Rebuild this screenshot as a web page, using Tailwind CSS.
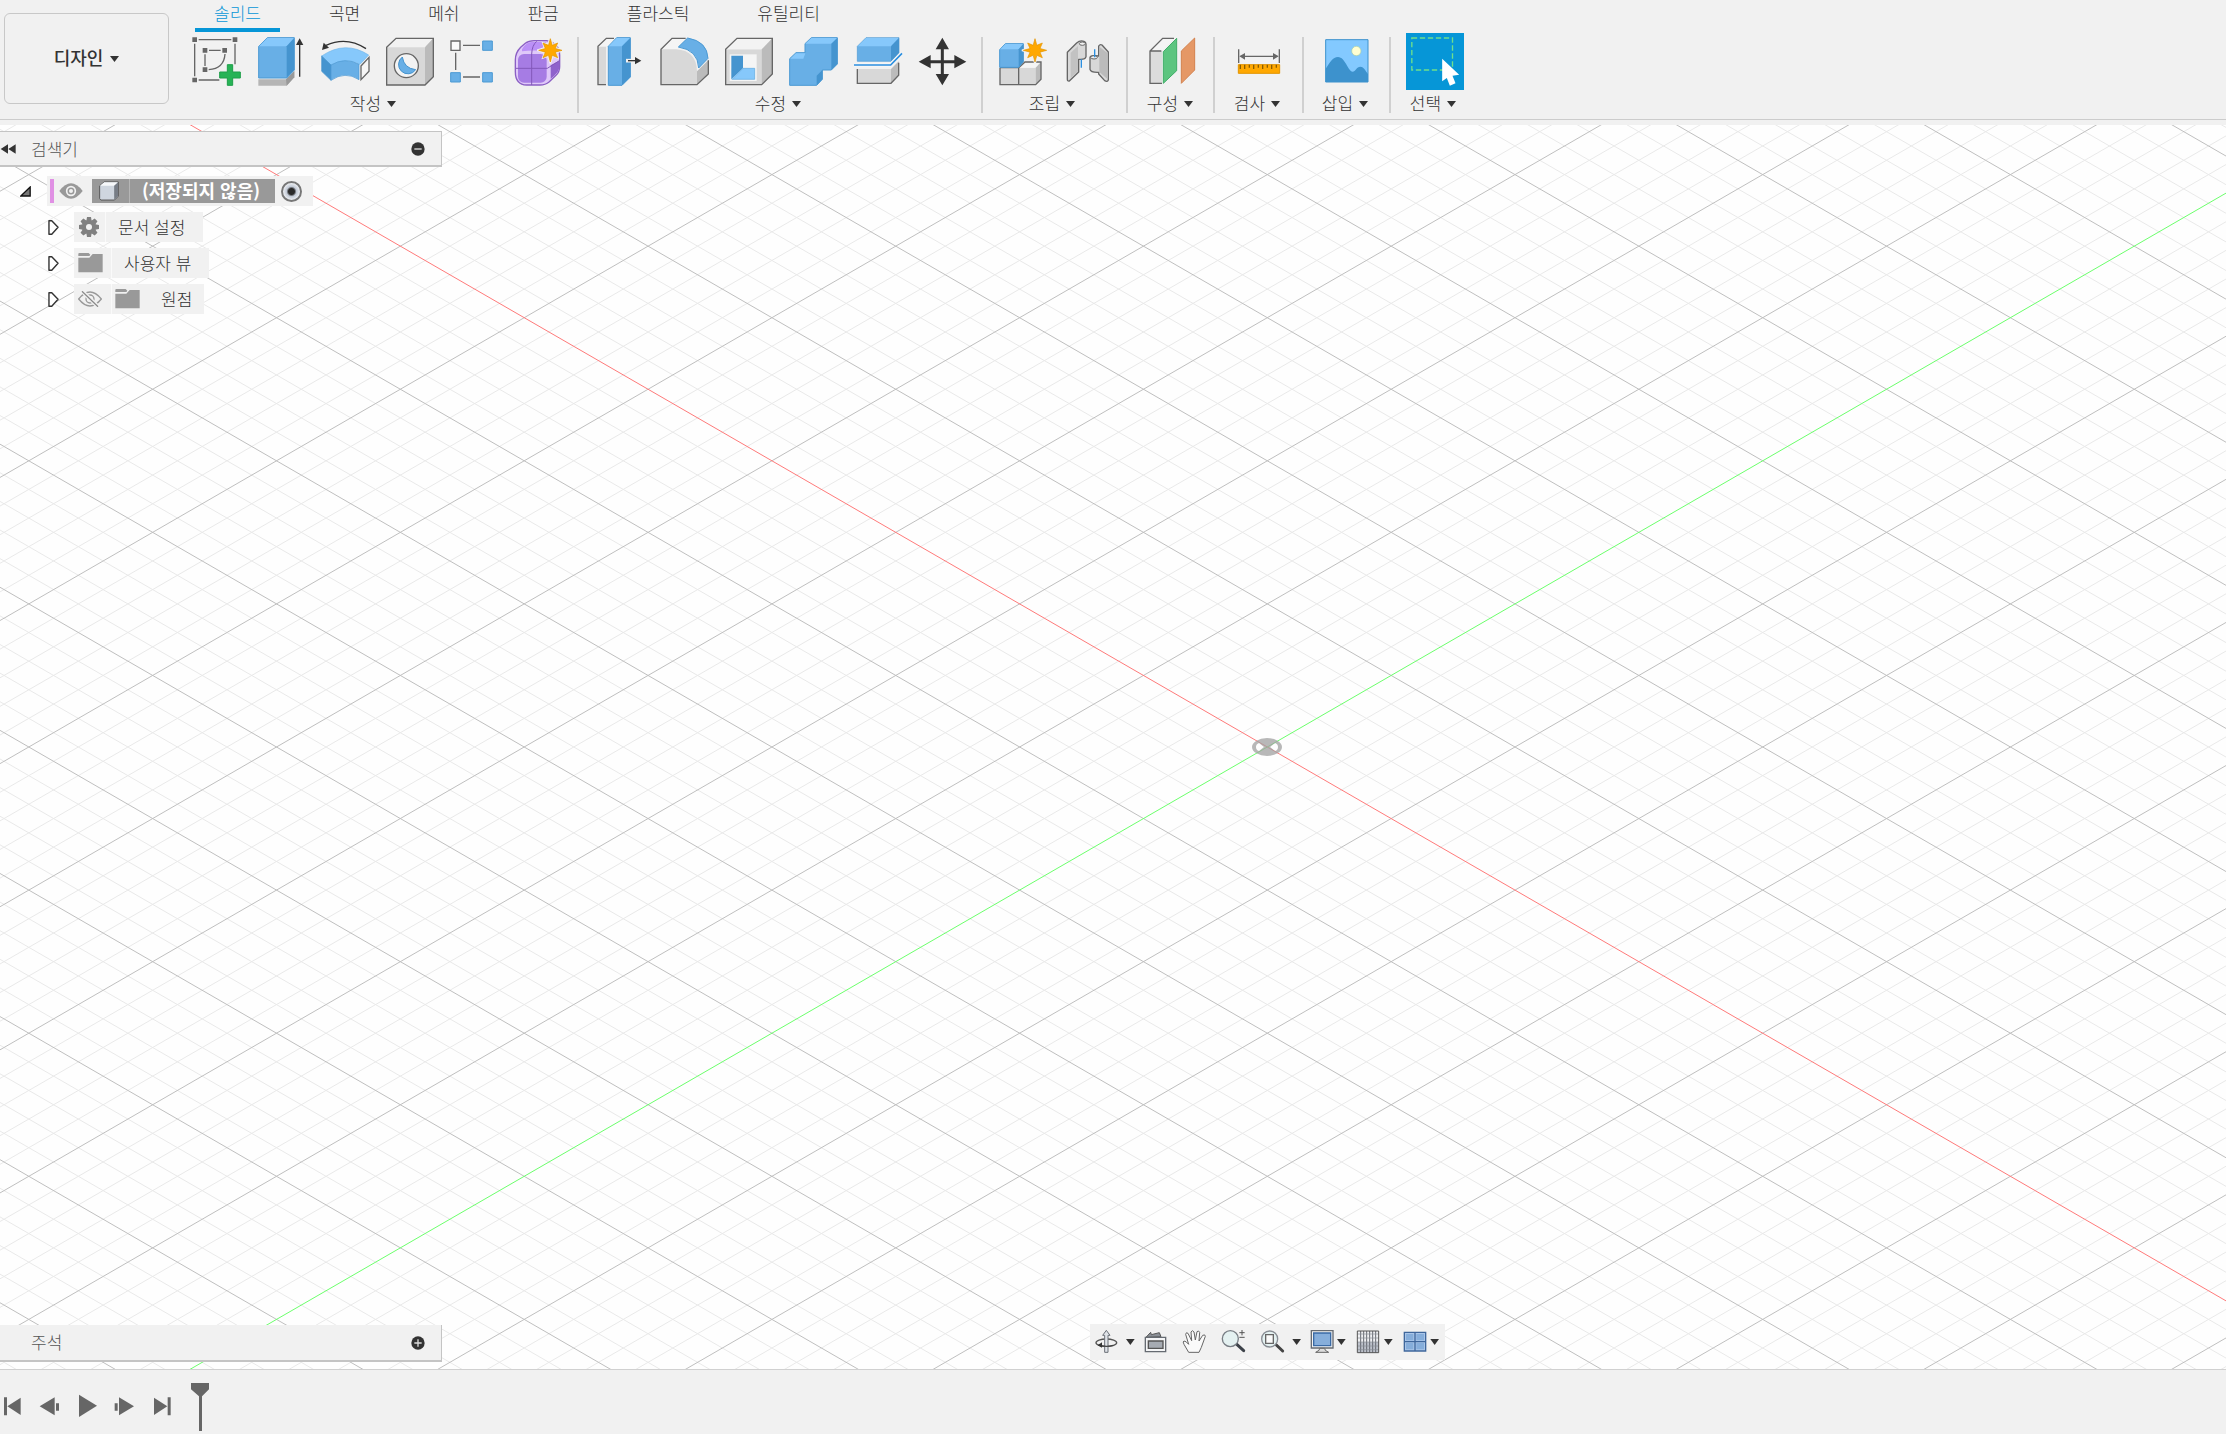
<!DOCTYPE html>
<html lang="ko">
<head>
<meta charset="utf-8">
<meta name="viewport" content="width=device-width, initial-scale=1">
<title>디자인</title>
<script src="https://cdn.jsdelivr.net/npm/@tailwindcss/browser@4"></script>
</head>
<body class="flex h-screen flex-col overflow-hidden bg-[#f1f1f1] font-['Noto_Sans_CJK_KR',sans-serif] text-[17px] leading-6 font-light text-[#333]">

<svg class="hidden" aria-hidden="true">
  <symbol id="caret" viewBox="0 0 27 18"><path d="M0 0H27L13.500 18Z" fill="#333"/></symbol>
  <symbol id="burst" viewBox="-40 -40 80 80"><path d="M0-36L6.500-16L21-21L16-6.500L36 0L16 6.500L21 21L6.500 16L0 36L-6.500 16L-21 21L-16 6.500L-36 0L-16-6.500L-21-21L-6.500-16Z" fill="#f1f1f1" stroke="#f1f1f1" stroke-width="7"/><path d="M0-35L5.500-15L22-22L15-5.500L35 0L15 5.500L22 22L5.500 15L0 35L-5.500 15L-22 22L-15 5.500L-35 0L-15-5.500L-22-22L-5.500-15Z" fill="#ffa800" stroke="#e29400" stroke-width="2"/></symbol>
  <symbol id="folder" viewBox="0 0 75 60"><path d="M1 3Q1 0 4 0H32L37 5Q36 9 32 9H1Z" fill="#999"/><path d="M1 14H34L44 3H74V58H1Z" fill="#999"/></symbol>
  <symbol id="expand" viewBox="0 0 30 43"><path d="M2 2H10L28 21L10 41H2Z" fill="#fff" stroke="#333" stroke-width="4" stroke-linejoin="round"/></symbol>
</svg>

<header class="flex border-b border-[#ccc] pb-px">
  <button class="mt-[13px] ml-1 flex h-[91px] w-[165px] shrink-0 items-center justify-center gap-[7px] rounded-md border border-[#c8c8c8] pb-1 text-lg font-medium">디자인
    <svg class="mt-1 h-1.5 w-[9px]"><use href="#caret"/></svg>
  </button>
  <div class="ml-4 flex min-w-0 flex-1 flex-col">
    <nav class="mb-px ml-[10px] flex gap-[30px]">
      <button class="h-8 border-b-4 border-[#0696d7] px-[19px] pb-[3px] text-[#0696d7]">솔리드</button>
      <button class="h-8 border-b-4 border-transparent px-[19px] pb-[3px]">곡면</button>
      <button class="h-8 border-b-4 border-transparent px-[19px] pb-[3px]">메쉬</button>
      <button class="h-8 border-b-4 border-transparent px-[19px] pb-[3px]">판금</button>
      <button class="h-8 border-b-4 border-transparent px-[19px] pb-[3px]">플라스틱</button>
      <button class="h-8 border-b-4 border-transparent px-[19px] pb-[3px]">유틸리티</button>
    </nav>
    <div class="flex">
      <!-- Create -->
      <section class="flex flex-col items-center">
        <div class="flex">
          <button aria-label="스케치 작성" class="h-[57px] w-16"><svg viewBox="15 99 192 171" class="size-full">
            <g fill="#666"><path d="M37 112h14v14H37zM158 112h14v14h-14zM37 233h14v14H37zM68 144h14v14H68zM127 144h14v14h-14zM68 202h14v14H68z"/></g>
            <path d="M56 119H154M44 131V229M165 131V193M56 240H118M75 163V198M87 151H122M135 162Q132 206 86 209" fill="none" stroke="#666" stroke-width="4"/>
            <path d="M142 194h16v22h23v18h-23v22h-16v-22h-23v-18h23z" fill="#27b356" stroke="#1f9f4a" stroke-width="3"/></svg></button>
          <button aria-label="돌출" class="h-[57px] w-16"><svg viewBox="207 99 192 171" class="size-full">
            <path d="M235 238H318L343 213V232L320 257H235Z" fill="#b5b5b5"/><path d="M318 238L343 213V232L320 257Z" fill="#999"/>
            <path d="M236 139L262 113H343V210L320 234H236Z" fill="#68afe6" stroke="#4b99d3" stroke-width="3"/>
            <path d="M237 139L262 114H342L320 139Z" fill="#86c8fb"/><path d="M320 139L342 115V210L320 233Z" fill="#4594cf"/>
            <path d="M359 130V230" stroke="#333" stroke-width="4"/><path d="M359 115L370 135H348Z" fill="#333"/></svg></button>
          <button aria-label="회전" class="h-[57px] w-16"><svg viewBox="399 99 192 171" class="size-full">
            <path d="M438 136Q500 108 558 146" fill="none" stroke="#333" stroke-width="4"/><path d="M426 150L431 128L447 143Z" fill="#333"/>
            <path d="M425 168Q496 120 566 165L540 193Q495 170 453 195Z" fill="#86c8fb" stroke="#6fb5ea" stroke-width="2"/>
            <path d="M425 168L453 195V241L425 214Z" fill="#4594cf" stroke="#4594cf" stroke-width="2"/>
            <path d="M453 195Q495 170 537 193V239Q495 212 453 241Z" fill="#68afe6" stroke="#4b99d3" stroke-width="2"/>
            <path d="M543 198L567 172V214L543 239Z" fill="#f6f6f6" stroke="#666" stroke-width="4"/></svg></button>
          <button aria-label="구멍" class="h-[57px] w-16"><svg viewBox="591 99 192 171" class="size-full">
            <path d="M620 142L650 115H760V230L735 255H620Z" fill="#d8d8d8"/><path d="M620 142L650 115H760L735 142Z" fill="#f2f2f2"/><path d="M735 142L760 115V230L735 255Z" fill="#bbb"/>
            <path d="M620 142L648 115H760V230L735 255H620Z" fill="none" stroke="#666" stroke-width="4"/>
            <circle cx="679" cy="197" r="36" fill="#f3f3f3" stroke="#666" stroke-width="4"/>
            <path d="M667 171Q672 205 707 209A28 28 0 1 1 667 171Z" fill="#68afe6" stroke="#4594cf" stroke-width="3"/></svg></button>
          <button aria-label="직사각형 패턴" class="h-[57px] w-16"><svg viewBox="783 99 192 171" class="size-full">
            <path d="M813 123h27v28h-27z" fill="#fafafa" stroke="#666" stroke-width="4"/>
            <path d="M908 123h29v28h-29zM812 218h29v28h-29zM908 218h29v28h-29z" fill="#68afe6" stroke="#4b99d3" stroke-width="3"/>
            <path d="M849 136H900M827 158V210M849 231H900" stroke="#666" stroke-width="4"/></svg></button>
          <button aria-label="양식 작성" class="h-[57px] w-16"><svg viewBox="975 99 192 171" class="size-full">
            <path d="M1006 180Q1006 158 1022 142L1036 130Q1046 122 1062 122H1100Q1139 130 1139 165V200Q1139 215 1128 226L1108 245Q1096 255 1080 255H1040Q1006 254 1006 215Z" fill="#dfc8f9" stroke="#8b5fc4" stroke-width="4"/>
            <path d="M1026 148Q1036 127 1056 126H1098L1084 152Q1050 150 1026 154Z" fill="#bb90f7"/>
            <path d="M1112 196L1138 182V204Q1134 220 1112 236Z" fill="#8f62cc"/>
            <rect x="1014" y="162" width="86" height="86" rx="18" fill="#a67ce4"/>
            <path d="M1055 255V162Q1056 136 1070 124M1008 205H1102L1138 182" stroke="#8358ba" stroke-width="3" fill="none"/>
            <use href="#burst" x="1071" y="111" width="80" height="80"/></svg></button>
        </div>
        <button class="flex h-7 items-center gap-1.5 pr-2 pb-[2px]">작성<svg class="mt-0.5 h-1.5 w-[9px]"><use href="#caret"/></svg></button>
      </section>
      <div class="mt-1 mr-[11px] ml-2 h-[76px] w-0.5 bg-[#d0d0d0]"></div>
      <!-- Modify -->
      <section class="flex flex-col items-center">
        <div class="flex">
          <button aria-label="밀고 당기기" class="h-[57px] w-16"><svg viewBox="60 99 192 171" class="size-full">
            <path d="M84 140H108V255H84Z" fill="#d8d8d8"/><path d="M84 139L109 115H132L112 139Z" fill="#f5f5f5"/>
            <path d="M108 254H84V139L109 115H132" fill="none" stroke="#666" stroke-width="4"/>
            <path d="M115 139L140 113H181V231L156 256H115Z" fill="#68afe6" stroke="#4b99d3" stroke-width="3"/>
            <path d="M116 139L140 114H180L156 139Z" fill="#86c8fb"/><path d="M156 139L181 114V231L156 256Z" fill="#4594cf"/>
            <path d="M168 182H200" stroke="#f1f1f1" stroke-width="11"/><path d="M174 182H200" stroke="#333" stroke-width="4"/><path d="M195 171L214 182L195 193Z" fill="#333"/></svg></button>
          <button aria-label="모깎기" class="h-[57px] w-16"><svg viewBox="252 99 192 171" class="size-full">
            <path d="M273 148L306 115H347L322 148Z" fill="#f5f5f5"/>
            <path d="M381 214L415 181V222L381 254Z" fill="#bbb"/>
            <path d="M273 148H318Q380 152 381 214V254H273Z" fill="#d8d8d8"/>
            <path d="M347 115H306L273 148V254H381L415 222V181" fill="none" stroke="#666" stroke-width="4"/>
            <path d="M325 141L353 114Q412 124 414 175L386 204Q384 150 325 141Z" fill="#68afe6" stroke="#4b99d3" stroke-width="3"/></svg></button>
          <button aria-label="쉘" class="h-[57px] w-16"><svg viewBox="444 99 192 171" class="size-full">
            <path d="M467 148H575V254H467Z" fill="#d8d8d8"/><path d="M467 148L501 115H607L575 148Z" fill="#f3f3f3"/><path d="M575 148L607 115V222L575 254Z" fill="#bbb"/>
            <path d="M467 148L501 115H607V222L575 254H467Z" fill="none" stroke="#666" stroke-width="4"/>
            <path d="M479 163H560V243H479Z" fill="#f5f5f5"/><path d="M484 167H519V205L484 238Z" fill="#4594cf"/><path d="M519 205H554V238H486Z" fill="#86c8fb" stroke="#5ca7df" stroke-width="2"/></svg></button>
          <button aria-label="결합" class="h-[57px] w-16"><svg viewBox="636 99 192 171" class="size-full">
            <path d="M659 176L678 158H705V131L724 113H802V192L784 210H757V238L740 256H659Z" fill="#68afe6" stroke="#4b99d3" stroke-width="3"/>
            <path d="M706 131L724 114H801L784 131ZM661 176L678 160H706L700 176Z" fill="#86c8fb"/><path d="M784 131L802 114V192L784 210ZM740 227L757 210V238L740 255Z" fill="#4594cf"/></svg></button>
          <button aria-label="본체 분할" class="h-[57px] w-16"><svg viewBox="828 99 192 171" class="size-full">
            <path d="M862 207H963V250H862Z" fill="#d8d8d8"/><path d="M963 207L986 184V226L963 250Z" fill="#bbb"/><path d="M862 207V250H963L986 226V188" fill="none" stroke="#666" stroke-width="4"/>
            <path d="M862 139L888 113H987V158L963 184H862Z" fill="#68afe6" stroke="#4b99d3" stroke-width="2"/><path d="M863 139L888 114H986L963 139Z" fill="#86c8fb"/><path d="M963 139L987 114V158L963 184Z" fill="#4594cf"/>
            <path d="M852 195H962L996 160" fill="none" stroke="#f5f5f5" stroke-width="12"/><path d="M852 195H962L996 160" fill="none" stroke="#2b8fe0" stroke-width="5"/></svg></button>
          <button aria-label="이동/복사" class="h-[57px] w-16"><svg viewBox="1020 99 192 171" class="size-full">
            <path d="M1117 140V230M1072 185H1162" stroke="#333" stroke-width="9"/><path d="M1117 113L1137 148H1097ZM1117 256L1137 222H1097ZM1046 185L1082 165V205ZM1189 185L1153 165V205Z" fill="#333"/></svg></button>
        </div>
        <button class="flex h-7 items-center gap-1.5 pr-2 pb-[2px]">수정<svg class="mt-0.5 h-1.5 w-[9px]"><use href="#caret"/></svg></button>
      </section>
      <div class="mt-1 mr-[9px] ml-[7px] h-[76px] w-0.5 bg-[#d0d0d0]"></div>
      <!-- Assemble -->
      <section class="flex flex-col items-center">
        <div class="flex">
          <button aria-label="새 구성요소" class="h-[57px] w-16"><svg viewBox="66 99 192 171" class="size-full">
            <path d="M90 203H197V254H90Z" fill="#d8d8d8"/><path d="M146 203L165 186H213L197 203Z" fill="#f5f5f5"/><path d="M197 203L213 186V238L197 254Z" fill="#bbb"/>
            <path d="M90 203V254H197L213 238V186H165L146 203V254M90 203H144" fill="none" stroke="#666" stroke-width="4"/>
            <path d="M89 149L106 131H160V185L146 202H89Z" fill="#68afe6" stroke="#4b99d3" stroke-width="3"/><path d="M91 148L106 132H159L146 148Z" fill="#86c8fb"/><path d="M146 148L160 132V185L146 201Z" fill="#4594cf"/>
            <use href="#burst" x="155" y="111" width="80" height="80"/></svg></button>
          <button aria-label="접합" class="h-[57px] w-16"><svg viewBox="258 99 192 171" class="size-full">
            <g fill="#d8d8d8" stroke="#666" stroke-width="4" stroke-linejoin="round">
            <path d="M292 157L320 129Q330 120 342 124Q348 126 348 132V170Q346 180 326 178V216L298 243Q292 244 292 238Z"/>
            <path d="M386 138Q390 132 396 135L415 156V240Q412 247 404 242L386 222V217Q362 218 360 208V172Q362 164 386 168Z"/></g>
            <path d="M388 140L413 160V238L388 216Z" fill="#bbb"/><path d="M324 138V214L302 234V158Z" fill="#c2c2c2"/>
            <ellipse cx="337" cy="131" rx="9" ry="5" fill="#f1f1f1" stroke="#666" stroke-width="3"/><ellipse cx="372" cy="172" rx="10" ry="5" fill="#f1f1f1" stroke="#666" stroke-width="3"/>
            <path d="M334 178V203M374 148V172" stroke="#2b8fe0" stroke-width="4"/></svg></button>
        </div>
        <button class="flex h-7 items-center gap-1.5 pr-2 pb-[2px]">조립<svg class="mt-0.5 h-1.5 w-[9px]"><use href="#caret"/></svg></button>
      </section>
      <div class="mt-1 mr-3 ml-1.5 h-[76px] w-0.5 bg-[#d0d0d0]"></div>
      <!-- Construct -->
      <section class="flex flex-col items-center">
        <button aria-label="간격띄우기 평면" class="h-[57px] w-16"><svg viewBox="510 99 192 171" class="size-full">
          <path d="M540 153H576V250H540Z" fill="#dcdcdc"/><path d="M540 153L578 115H612L576 153Z" fill="#f5f5f5"/><path d="M576 250H540V153L578 115H612M540 153H574" fill="none" stroke="#666" stroke-width="4"/>
          <path d="M580 155L620 115V212L580 250Z" fill="#5cc57f" stroke="#3fae68" stroke-width="3"/><path d="M634 153L674 114V210L634 250Z" fill="#e59866" stroke="#d3824e" stroke-width="3"/></svg></button>
        <button class="flex h-7 items-center gap-1.5 pr-1 pb-[2px]">구성<svg class="mt-0.5 h-1.5 w-[9px]"><use href="#caret"/></svg></button>
      </section>
      <div class="mt-1 mr-3 ml-[9px] h-[76px] w-0.5 bg-[#d0d0d0]"></div>
      <!-- Inspect -->
      <section class="flex flex-col items-center">
        <button aria-label="측정" class="h-[57px] w-16"><svg viewBox="771 99 192 171" class="size-full">
          <path d="M806 148V189M928 148V189M812 169H922" stroke="#666" stroke-width="4"/><path d="M808 169L825 159V179ZM926 169L909 159V179Z" fill="#666"/>
          <path d="M805 194H929V220H805Z" fill="#ffa800" stroke="#e29400" stroke-width="3"/><path d="M811 194V207M824 194V207M838 194V203M851 194V207M865 194V203M878 194V207M892 194V203M905 194V207M919 194V203" stroke="#8a5c00" stroke-width="4"/></svg></button>
        <button class="flex h-7 items-center gap-1.5 pr-1 pb-[2px]">검사<svg class="mt-0.5 h-1.5 w-[9px]"><use href="#caret"/></svg></button>
      </section>
      <div class="mt-1 mr-[11px] ml-[11px] h-[76px] w-0.5 bg-[#d0d0d0]"></div>
      <!-- Insert -->
      <section class="flex flex-col items-center">
        <button aria-label="캔버스" class="h-[57px] w-16"><svg viewBox="1035 99 192 171" class="size-full">
          <path d="M1067 119H1194V246H1067Z" fill="#83c9ff"/><path d="M1067 206C1080 188 1088 171 1104 171C1126 171 1134 215 1148 215C1156 215 1160 200 1171 200C1182 200 1188 215 1194 222V246H1067Z" fill="#3d92cd"/>
          <path d="M1067 119H1194V246H1067Z" fill="none" stroke="#3d92cd" stroke-width="3"/><circle cx="1159" cy="153" r="14" fill="#ffffd2" stroke="#a9cfa8" stroke-width="2"/></svg></button>
        <button class="flex h-7 items-center gap-1.5 pr-1 pb-[2px]">삽입<svg class="mt-0.5 h-1.5 w-[9px]"><use href="#caret"/></svg></button>
      </section>
      <div class="mt-1 mr-3 ml-[10px] h-[76px] w-0.5 bg-[#d0d0d0]"></div>
      <!-- Select -->
      <section class="flex flex-col items-center">
        <button aria-label="선택 도구" aria-pressed="true" class="h-[57px] w-16 px-[3px]"><svg viewBox="1308 99 171 171" class="size-full bg-[#0696d7]">
          <path d="M1324 114H1446V210H1324Z" fill="none" stroke="#6fe08c" stroke-width="4" stroke-dasharray="16 8"/>
          <path d="M1415 176V244L1429 234L1438 257L1455 250L1446 227L1466 224Z" fill="#fff"/></svg></button>
        <button class="flex h-7 items-center gap-1.5 pr-1 pb-[2px]">선택<svg class="mt-0.5 h-1.5 w-[9px]"><use href="#caret"/></svg></button>
      </section>
    </div>
  </div>
</header>

<main class="relative mt-[5px] min-h-0 flex-1 overflow-hidden bg-[#fefefe]">
  <svg class="absolute inset-0 size-full" viewBox="0 0 2226 1244" preserveAspectRatio="xMidYMid slice" aria-label="작업 평면">
    <path id="minor" fill="none" stroke="#e9e9e9"/>
    <path id="major" fill="none" stroke="#bfbfbf"/>
    <path id="axis-x" fill="none" stroke="#ff7a7a"/>
    <path id="axis-y" fill="none" stroke="#6cff6c"/>
    <path transform="translate(1267 622)" fill-rule="evenodd" fill="#a0a0a0" fill-opacity=".75" d="M-15 0A15 9 0 0 1 15 0A15 9 0 0 1 -15 0ZM-3 0L-8-4Q-11-3-11 0T-8 4ZM3 0L8-4Q11-3 11 0T8 4Z"/>
  </svg>

  <aside class="absolute top-1.5 left-0 w-[442px]">
    <div class="flex h-9 items-center border-t border-r border-b-2 border-[#c4c4c4] bg-[#f1f1f1] pr-4 text-[#555]">
      <button aria-label="접기" class="w-[31px] shrink-0"><svg viewBox="0 0 93 30" class="h-[10px] w-[31px]"><path d="M2 15L24 1V29ZM25 15L47 1V29Z" fill="#333"/></svg></button>
      <h2 class="flex-1">검색기</h2>
      <button aria-label="최소화"><svg viewBox="0 0 42 42" class="size-[14px]"><circle cx="21" cy="21" r="20" fill="#333"/><path d="M10 21H32" stroke="#ddd" stroke-width="4"/></svg></button>
    </div>
    <ul class="mt-[9px] flex flex-col gap-1.5">
      <li class="flex h-[30px] items-center">
        <button aria-label="축소" class="flex w-[47px] justify-center pl-1"><svg viewBox="0 0 32 33" class="h-[11px] w-[11px]"><path d="M2 30L30 3V30Z" fill="#777" stroke="#111" stroke-width="4"/></svg></button>
        <div class="flex h-full items-center bg-[#f1f1f1] px-[3px]">
          <span class="h-6 w-1 bg-[#e090e4]"></span>
          <button aria-label="표시" class="ml-[5px]"><svg viewBox="0 0 72 48" class="h-4 w-6"><path d="M1 24Q36-22 71 24Q36 70 1 24Z" fill="#999"/><circle cx="36" cy="24" r="13" fill="#999" stroke="#f1f1f1" stroke-width="5"/><circle cx="36" cy="24" r="6" fill="#f1f1f1"/></svg></button>
          <div class="ml-[9px] flex h-6 items-center bg-[#999]">
            <span class="flex h-full w-[38px] items-center justify-center border-r border-[#b5b5b5] pr-1"><svg viewBox="0 0 62 60" class="size-5"><path d="M2 14L16 2H60V46L48 58H6L2 54Z" fill="#cfd6df" stroke="#555" stroke-width="3"/><path d="M3 14L16 3H59L47 14Z" fill="#f6f8fa"/><path d="M47 14L59 3V46L47 57Z" fill="#777d86"/></svg></span>
            <span class="w-[145px] pb-0.5 pl-3 text-lg leading-6 font-bold text-white">(저장되지 않음)</span>
          </div>
          <input type="radio" checked aria-label="구성요소 활성화" class="mr-2 ml-1.5 size-[21px] appearance-none rounded-full border-2 border-[#777] bg-[radial-gradient(circle,#2a2a2a_0_3px,#c3cad6_5px,#f4f6f8_9px)]">
        </div>
      </li>
      <li class="flex h-[30px] items-center">
        <button aria-label="확장" class="flex w-[74px] pl-12"><svg class="h-[15px] w-[11px]"><use href="#expand"/></svg></button>
        <div class="flex h-full items-center bg-[#f1f1f1]">
          <span class="flex h-full w-8 items-center border-r border-[#fafafa] pl-[5px]"><svg viewBox="-30 -30 60 60" class="size-5"><g fill="#808080"><circle r="21"/><path id="teeth" d="M-6-30H6L8-18H-8ZM-6 30H6L8 18H-8Z"/><use href="#teeth" transform="rotate(45)"/><use href="#teeth" transform="rotate(90)"/><use href="#teeth" transform="rotate(135)"/></g><circle r="9" fill="#f1f1f1"/></svg></span>
          <span class="pr-[18px] pl-3">문서 설정</span>
        </div>
      </li>
      <li class="flex h-[30px] items-center">
        <button aria-label="확장" class="flex w-[74px] pl-12"><svg class="h-[15px] w-[11px]"><use href="#expand"/></svg></button>
        <div class="flex h-full items-center bg-[#f1f1f1]">
          <span class="flex h-full w-[38px] items-center border-r border-[#fafafa] pl-1"><svg class="h-5 w-[25px]"><use href="#folder"/></svg></span>
          <span class="pr-[18px] pl-3">사용자 뷰</span>
        </div>
      </li>
      <li class="flex h-[30px] items-center">
        <button aria-label="확장" class="flex w-[74px] pl-12"><svg class="h-[15px] w-[11px]"><use href="#expand"/></svg></button>
        <div class="flex h-full items-center bg-[#f1f1f1]">
          <button aria-label="숨김" class="flex h-full w-[38px] items-center border-r border-[#fafafa] pl-1"><svg viewBox="0 0 72 48" class="h-4 w-6"><g fill="none" stroke="#999" stroke-width="4"><path d="M2 24Q36-18 70 24Q36 66 2 24Z"/><circle cx="36" cy="24" r="12"/></g><path d="M14 2L60 47" stroke="#f1f1f1" stroke-width="12"/><path d="M12 1L60 47" stroke="#888" stroke-width="4"/></svg></button>
          <svg class="ml-[3px] h-5 w-[25px]"><use href="#folder"/></svg>
          <span class="pr-3 pl-[21px]">원점</span>
        </div>
      </li>
    </ul>
  </aside>

  <section class="absolute bottom-[7px] left-0 flex h-[37px] w-[442px] items-center border-r border-b-2 border-[#c4c4c4] bg-[#f1f1f1] pr-4 pb-0.5 pl-[31px] text-[#555]">
    <h2 class="flex-1">주석</h2>
    <button aria-label="주석 펼치기"><svg viewBox="0 0 42 42" class="mt-0.5 size-[14px]"><circle cx="21" cy="21" r="20" fill="#333"/><path d="M10 21H32M21 10V32" stroke="#ddd" stroke-width="4"/></svg></button>
  </section>

  <div role="toolbar" aria-label="탐색" class="absolute bottom-[9px] left-[48.96%] flex h-9 bg-[#f1f1f1]">
    <button aria-label="궤도" class="w-[49px]"><svg viewBox="30 42 147 108" class="size-full">
      <ellipse cx="79" cy="98" rx="31" ry="11" fill="none" stroke="#555" stroke-width="4"/><path d="M79 61L90 76H84V127H74V76H68Z" fill="#dfe3e8" stroke="#6b7078" stroke-width="3"/>
      <path d="M56 105Q78 113 100 106" fill="none" stroke="#444" stroke-width="4"/><path d="M53 106L66 97V113Z" fill="#333"/><path d="M138 87H164L151 105Z" fill="#333"/></svg></button>
    <button aria-label="보기" class="w-9"><svg viewBox="177 42 108 108" class="size-full">
      <path d="M198 82L212 67L214 74L238 68L243 80Z" fill="#8b9097" stroke="#555" stroke-width="3"/><path d="M196 82H257V125H196Z" fill="#f4f5f6" stroke="#666b72" stroke-width="4"/><path d="M205 93H249V115H205Z" fill="#a6abb2" stroke="#555" stroke-width="4"/></svg></button>
    <button aria-label="초점이동" class="w-[39px]"><svg viewBox="285 42 117 108" class="size-full">
      <path d="M326 127L312 103Q307 94 312 93Q318 93 326 103L317 73Q318 65 324 70L335 92L333 66Q337 58 342 66L346 90L351 65Q356 60 359 67L357 93L368 76Q376 72 376 79L364 112L357 127Z" fill="#fafafa" stroke="#666" stroke-width="3" stroke-linejoin="round"/></svg></button>
    <button aria-label="줌" class="w-[39px]"><svg viewBox="402 42 117 108" class="size-full">
      <path d="M468 101L491 122" stroke="#3c4148" stroke-width="9" stroke-linecap="round"/><circle cx="451" cy="86" r="24" fill="#e4f1f1" stroke="#777d84" stroke-width="4"/><path d="M478 68H494M486 60V76M478 82H494" stroke="#555" stroke-width="3"/></svg></button>
    <button aria-label="맞춤" class="w-[52px]"><svg viewBox="519 42 156 108" class="size-full">
      <path d="M586 102L608 123" stroke="#444" stroke-width="9" stroke-linecap="round"/><circle cx="569" cy="87" r="24" fill="#e4f1f1" stroke="#888d94" stroke-width="4"/><path d="M557 74H580V100H557Z" fill="#fafafa" stroke="#666" stroke-width="4"/><path d="M637 87H663L650 105Z" fill="#333"/></svg></button>
    <button aria-label="화면표시 설정" class="w-[43px]"><svg viewBox="675 42 129 108" class="size-full">
      <path d="M694 62H759V114H694Z" fill="#f4f4f4" stroke="#666b72" stroke-width="4"/><path d="M701 69H752V107H701Z" fill="#86aedb" stroke="#3a6aa5" stroke-width="4"/><path d="M719 115H734L736 121L746 127H707L717 121Z" fill="#ddd" stroke="#666" stroke-width="3"/><path d="M771 87H797L784 105Z" fill="#333"/></svg></button>
    <button aria-label="그리드 및 스냅" class="w-12"><svg viewBox="804 42 144 108" class="size-full">
      <path d="M832 63H896V128H832Z" fill="#f0f1f3"/><path d="M832 96H896V128H832Z" fill="#bcc1ca"/><path d="M842 63V128M851 63V128M860 63V128M869 63V128M878 63V128M887 63V128" stroke="#666a72" stroke-width="3"/><path d="M832 72H896M832 84H896M832 96H896M832 108H896M832 119H896" stroke="#8a8e96" stroke-width="2"/><path d="M832 63H896V128H832Z" fill="none" stroke="#555" stroke-width="3"/><path d="M912 87H938L925 105Z" fill="#333"/></svg></button>
    <button aria-label="뷰포트" class="w-[49px]"><svg viewBox="948 42 147 108" class="size-full">
      <path d="M973 67H1037V123H973Z" fill="#a9c5e8" stroke="#3f679c" stroke-width="4"/><path d="M978 72H1000V91H978ZM1009 72H1032V91H1009ZM978 99H1000V118H978ZM1009 99H1032V118H1009Z" fill="#86aedb"/><path d="M1005 67V123M973 95H1037" stroke="#3f679c" stroke-width="4"/><path d="M1051 87H1077L1064 105Z" fill="#333"/></svg></button>
  </div>
</main>

<footer class="flex h-[65px] shrink-0 border-t border-[#d0d0d0] pt-[13px]">
  <button aria-label="처음으로" class="h-12 w-8"><svg viewBox="0 218 96 144" class="size-full"><path d="M12 261H21V315H12ZM22 288L62 262V314Z" fill="#666"/></svg></button>
  <button aria-label="이전 단계" class="h-12 w-[38px]"><svg viewBox="96 218 114 144" class="size-full"><path d="M119 288L164 261V315ZM168 279H177V301H168Z" fill="#666"/></svg></button>
  <button aria-label="재생" class="h-12 w-[38px]"><svg viewBox="210 218 114 144" class="size-full"><path d="M237 253L291 286L237 320Z" fill="#666"/></svg></button>
  <button aria-label="다음 단계" class="h-12 w-[38px]"><svg viewBox="324 218 114 144" class="size-full"><path d="M402 288L357 261V315ZM344 279H353V301H344Z" fill="#666"/></svg></button>
  <button aria-label="끝으로" class="h-12 w-[38px]"><svg viewBox="438 218 114 144" class="size-full"><path d="M503 261H512V315H503ZM462 262L502 288L462 314Z" fill="#666"/></svg></button>
  <button aria-label="타임라인 표식" class="h-12 w-8"><svg viewBox="552 218 96 144" class="size-full"><path d="M573 218H627V237L606 258V362H597V258L573 237Z" fill="#666"/></svg></button>
</footer>

<script>
  // Isometric work plane: both line families pass through the origin and repeat vertically.
  const origin = { x: 1267.3, y: 622 }, width = 2226, slope = 71.55 / 123.85, step = 28.62;
  const line = (k, dir) => {
    const y0 = origin.y + k * step - dir * origin.x * slope;
    return `M0 ${y0.toFixed(2)}L${width} ${(y0 + dir * width * slope).toFixed(2)}`;
  };
  let minor = '', major = '';
  for (let k = -55; k <= 55; k++) {
    if (k === 0) continue;
    const pair = line(k, 1) + line(k, -1);
    if (k % 5 === 0) major += pair; else minor += pair;
  }
  document.getElementById('minor').setAttribute('d', minor);
  document.getElementById('major').setAttribute('d', major);
  document.getElementById('axis-x').setAttribute('d', line(0, 1));
  document.getElementById('axis-y').setAttribute('d', line(0, -1));
</script>
</body>
</html>
